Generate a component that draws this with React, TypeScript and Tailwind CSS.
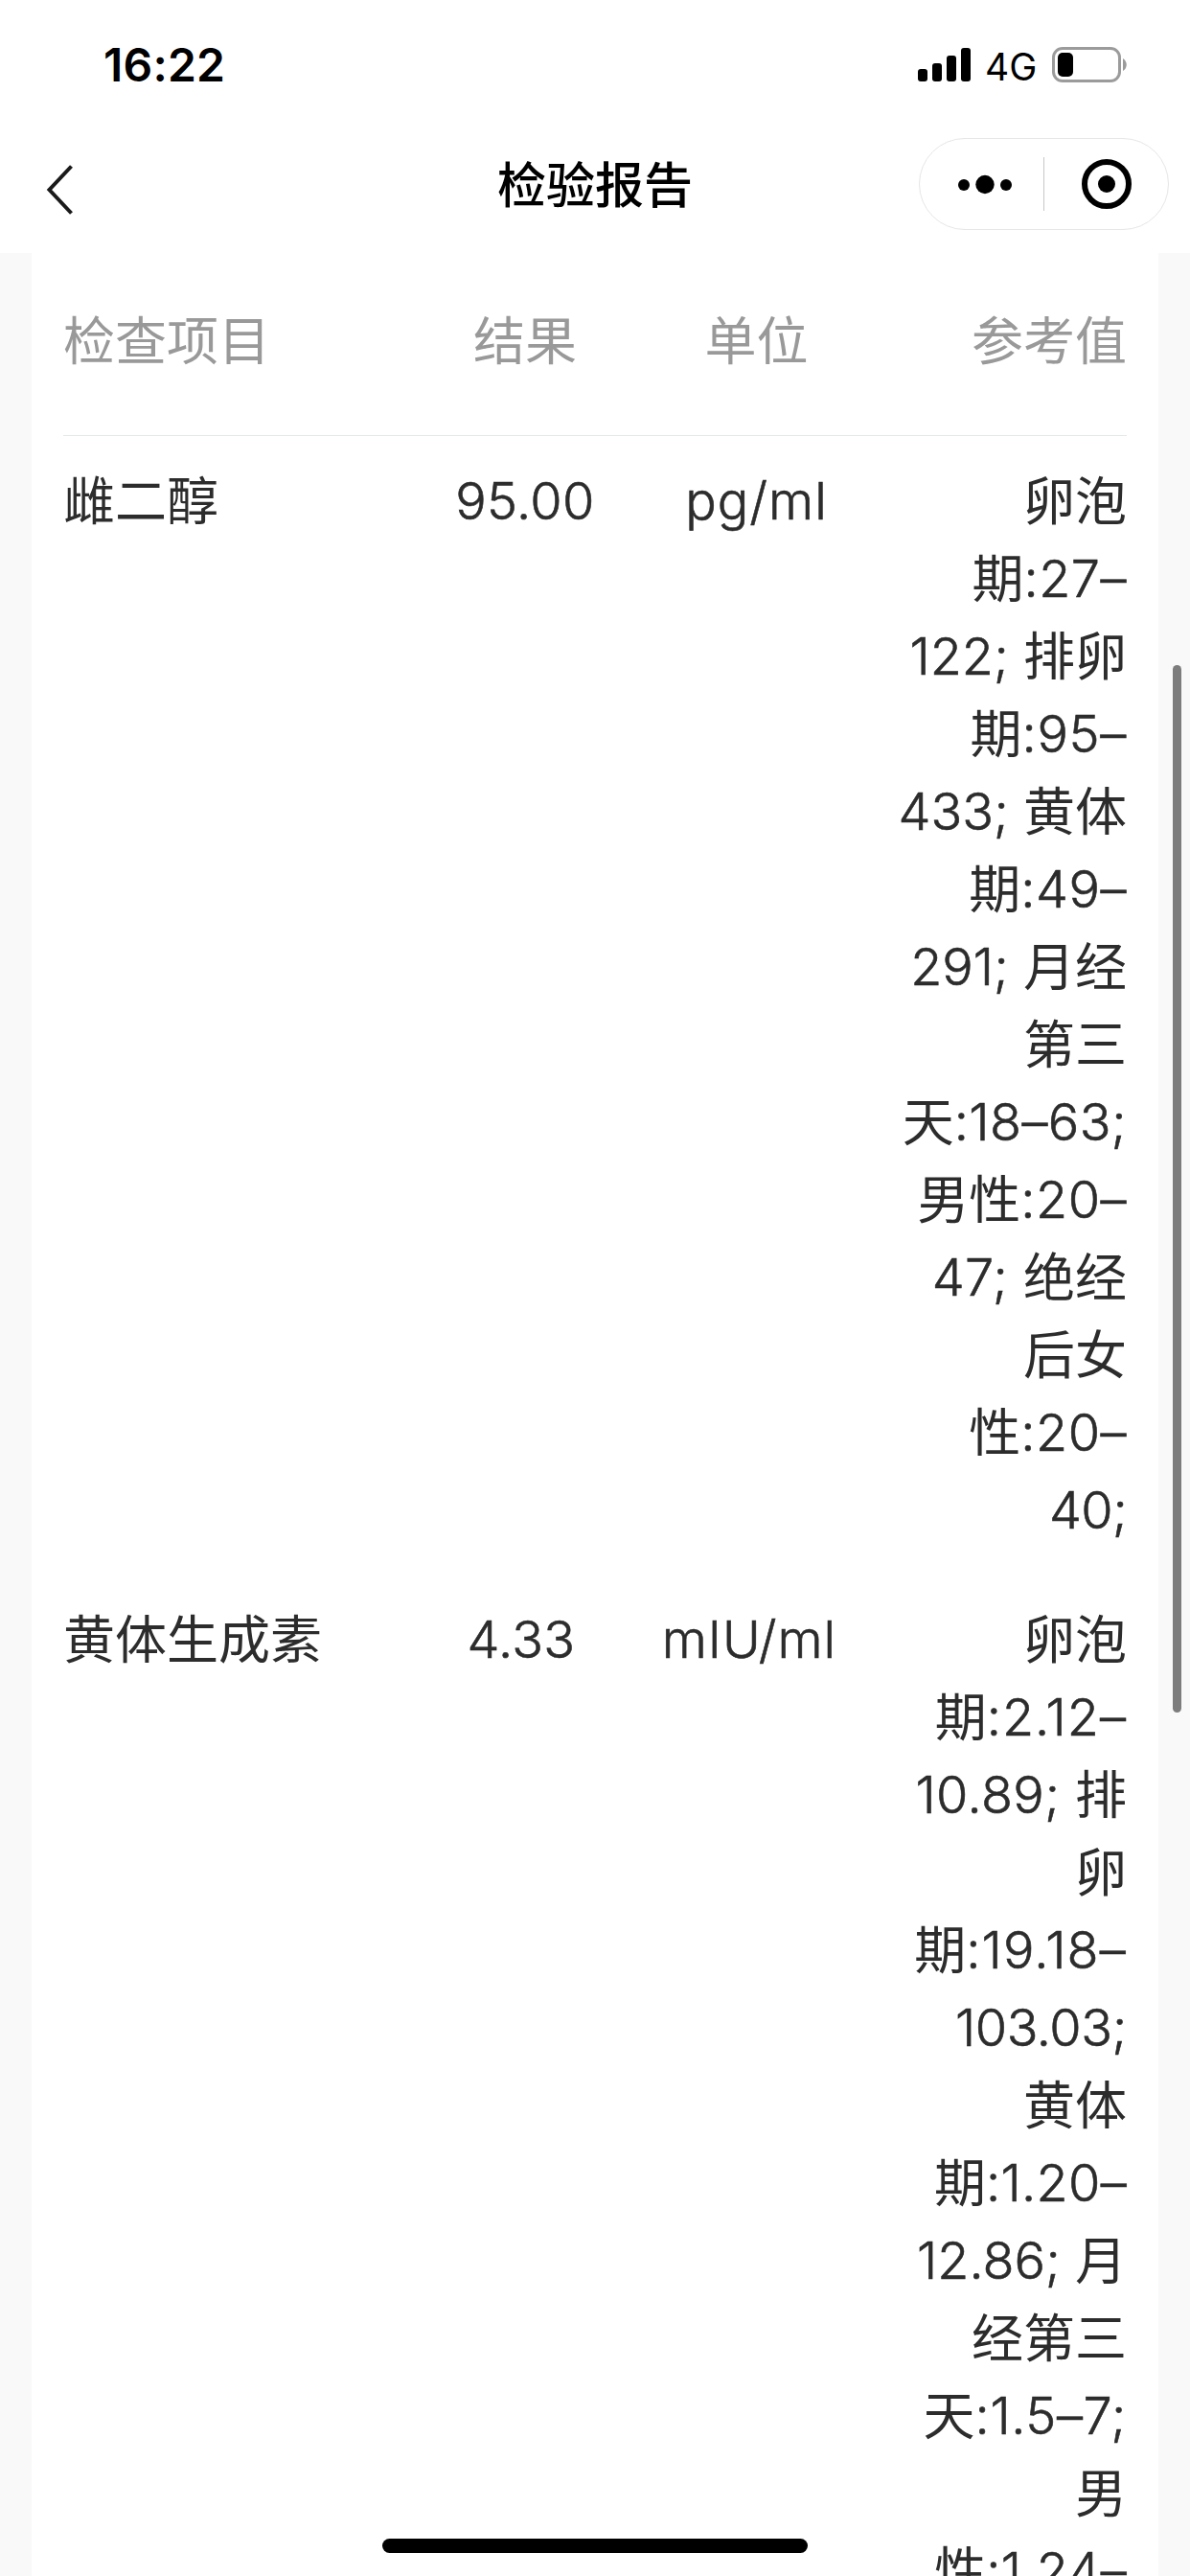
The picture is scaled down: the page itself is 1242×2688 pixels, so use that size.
type Line = { text: string; tracking?: string };

type Row = {
  name: string;
  result: string;
  unit: string;
  reference: Line[];
  columns: string;
};

const rows: Row[] = [
  {
    name: "雌二醇",
    result: "95.00",
    unit: "pg/ml",
    columns: "grid-cols-[361px_242px_241px_266px]",
    reference: [
      { text: "卵泡" },
      { text: "期:27–", tracking: "tracking-[0.5px]" },
      { text: "122; 排卵" },
      { text: "期:95–", tracking: "tracking-[0.7px]" },
      { text: "433; 黄体" },
      { text: "期:49–", tracking: "tracking-[0.5px]" },
      { text: "291; 月经" },
      { text: "第三" },
      { text: "天:18–63;", tracking: "tracking-[0.4px]" },
      { text: "男性:20–", tracking: "tracking-[0.5px]" },
      { text: "47; 绝经", tracking: "tracking-[0.5px]" },
      { text: "后女" },
      { text: "性:20–", tracking: "tracking-[0.5px]" },
      { text: "40;", tracking: "tracking-[-0.7px]" },
    ],
  },
  {
    name: "黄体生成素",
    result: "4.33",
    unit: "mIU/ml",
    columns: "grid-cols-[358px_240px_236px_276px]",
    reference: [
      { text: "卵泡" },
      { text: "期:2.12–", tracking: "tracking-[1px]" },
      { text: "10.89; 排", tracking: "tracking-[0.4px]" },
      { text: "卵" },
      { text: "期:19.18–", tracking: "tracking-[1.2px]" },
      { text: "103.03;", tracking: "tracking-[-0.4px]" },
      { text: "黄体" },
      { text: "期:1.20–", tracking: "tracking-[0.3px]" },
      { text: "12.86; 月" },
      { text: "经第三" },
      { text: "天:1.5–7;", tracking: "tracking-[0.6px]" },
      { text: "男" },
      { text: "性:1.24–", tracking: "tracking-[0.3px]" },
    ],
  },
];

/** Sets Han characters and Latin runs each in their own weight and baseline. */
function Mixed({ children, tracking = "" }: { children: string; tracking?: string }) {
  const runs = children.match(/[\u4e00-\u9fff]+|[^\u4e00-\u9fff]+/g) ?? [];
  return (
    <>
      {runs.map((run, i) =>
        /[\u4e00-\u9fff]/.test(run) ? (
          <span key={i} className="align-[-1px] font-normal leading-none">
            {run}
          </span>
        ) : (
          <span key={i} className={`font-light [-webkit-text-stroke:0.6px_currentColor] ${tracking}`}>
            {run}
          </span>
        ),
      )}
    </>
  );
}

function StatusBar() {
  return (
    <div className="flex h-[124px] items-start justify-between pl-[108px] pr-[65px] pt-[39px]">
      <div className="text-[48px] font-semibold leading-[58px] tracking-[0.2px] text-black">16:22</div>
      <div className="flex items-start pt-[10px]">
        <svg width="56" height="37" viewBox="0 0 56 37" className="mt-px">
          <rect x="0" y="22" width="10" height="13" rx="3" />
          <rect x="15" y="16" width="10" height="19" rx="3" />
          <rect x="30" y="8" width="10" height="27" rx="3" />
          <rect x="45" y="0" width="10" height="35" rx="3" />
        </svg>
        <div className="ml-[14px] w-[70px] text-[39px] leading-[41px] text-black">4G</div>
        <svg width="79" height="37" viewBox="0 0 79 37">
          <rect x="1.5" y="1.5" width="69" height="34" rx="9.5" fill="none" stroke="#9b9b9b" strokeWidth="3" />
          <rect x="6" y="6" width="16" height="25" rx="5" />
          <path d="M74 12c5 3 5 10 0 13z" fill="#9b9b9b" />
        </svg>
      </div>
    </div>
  );
}

function NavBar() {
  return (
    <div className="grid h-[140px] grid-cols-[1fr_auto_1fr] items-start">
      <svg width="30" height="54" viewBox="0 0 30 54" className="ml-[48px] mt-[47px]">
        <path d="M26.5 2.5L3.5 27L26.5 51.5" fill="none" stroke="#1a1a1a" strokeWidth="4" />
      </svg>
      <h1 className="mt-8 text-[51px] font-medium leading-[76px] text-black">检验报告</h1>
      <div className="mr-[22px] mt-[20px] flex h-24 w-[261px] items-center justify-self-end rounded-full border border-[#e6e6e6]">
        <svg width="129" height="94" viewBox="0 0 129 94">
          <circle cx="46" cy="48" r="6" />
          <circle cx="68" cy="47.5" r="9.7" />
          <circle cx="90" cy="48" r="6" />
        </svg>
        <div className="h-14 w-px bg-[#c8c8c8]" />
        <svg width="129" height="94" viewBox="0 0 129 94">
          <circle cx="65" cy="47" r="23" fill="none" stroke="#000" strokeWidth="6" />
          <circle cx="65" cy="47" r="9" />
        </svg>
      </div>
    </div>
  );
}

export default function App() {
  return (
    <div className="relative flex h-[2688px] w-[1242px] flex-col overflow-hidden bg-white font-['Inter','Noto_Sans_CJK_SC',sans-serif]">
      <StatusBar />
      <NavBar />
      <main className="min-h-0 flex-1 bg-[#f9f9f9] px-[33px]">
        <div className="h-full overflow-hidden bg-white px-[33px] text-[54px] leading-[81px] text-[#2c2c2c]">
          <div className="grid h-[191px] grid-cols-[361px_242px_241px_266px] border-b border-[#e2e8e7] pt-[52px] text-[#999999]">
            <div>检查项目</div>
            <div className="text-center">结果</div>
            <div className="text-center">单位</div>
            <div className="text-right">参考值</div>
          </div>
          {rows.map((row) => (
            <div key={row.name} className={`grid py-[27px] ${row.columns}`}>
              <div className="h-[81px]">
                <Mixed>{row.name}</Mixed>
              </div>
              <div className="text-center">
                <Mixed tracking="tracking-[0.4px]">{row.result}</Mixed>
              </div>
              <div className="text-center">
                <Mixed tracking="tracking-[1px]">{row.unit}</Mixed>
              </div>
              <div className="text-right">
                {row.reference.map((line, i) => (
                  <div key={i} className="h-[81px] whitespace-nowrap">
                    <Mixed tracking={line.tracking}>{line.text}</Mixed>
                  </div>
                ))}
              </div>
            </div>
          ))}
        </div>
      </main>
      <div className="absolute left-[1224px] top-[694px] h-[1093px] w-[9px] rounded-full bg-[#7d7d7d]" />
      <div className="absolute left-[399px] top-[2649px] h-[15px] w-[444px] rounded-full bg-black" />
    </div>
  );
}
